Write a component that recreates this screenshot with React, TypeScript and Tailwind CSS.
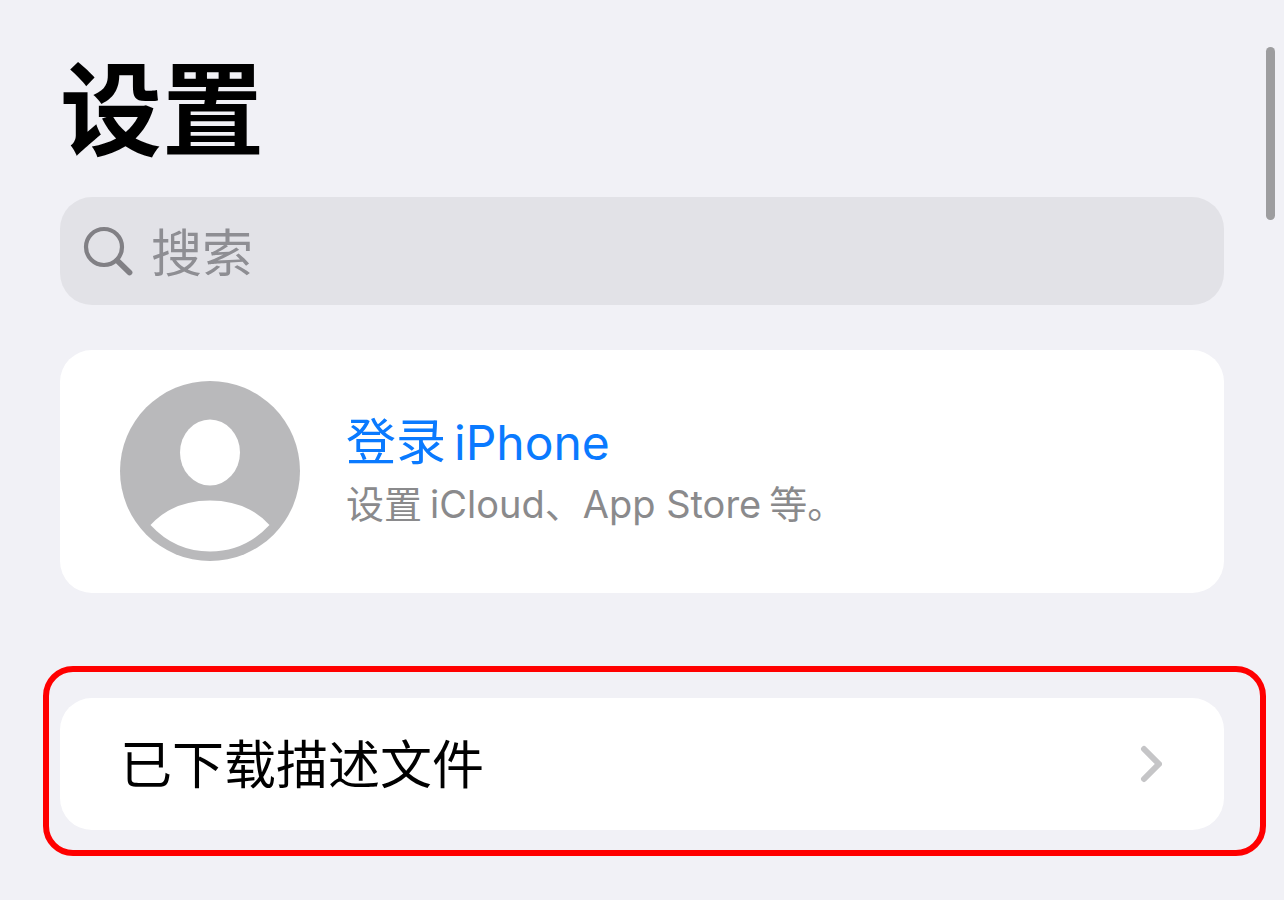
import { useState } from "react";

function SearchIcon() {
  return (
    <svg viewBox="0 0 50 50" className="size-[50px] shrink-0" fill="none" stroke="#818085" aria-hidden="true">
      <circle cx="21" cy="21" r="18" strokeWidth="4.2" />
      <path d="M34.2 34.5 46.5 46.5" strokeWidth="5.8" strokeLinecap="round" />
    </svg>
  );
}

function Avatar() {
  return (
    <svg viewBox="0 0 180 180" className="size-[180px] shrink-0" aria-hidden="true">
      <circle cx="90" cy="90" r="90" fill="#b9b9bb" />
      <ellipse cx="90" cy="71.5" rx="30" ry="33" fill="#fff" />
      <path d="M30.5 144Q53 119.5 90 119.5T149.5 144Q125 170.5 90 170.5T30.5 144Z" fill="#fff" />
    </svg>
  );
}

function Chevron() {
  return (
    <svg viewBox="0 0 22 38" className="h-[38px] w-[22px] shrink-0" fill="none" aria-hidden="true">
      <path d="M4 4 19 19 4 34" stroke="#c5c5c7" strokeWidth="6" strokeLinecap="round" strokeLinejoin="round" />
    </svg>
  );
}

export default function App() {
  const [query, setQuery] = useState("");

  return (
    <div
      lang="zh-CN"
      className="relative min-h-screen bg-[#f1f1f6] pt-12 font-['Inter','Noto_Sans_CJK_SC',sans-serif] text-black"
    >
      <header className="px-[60px]">
        <h1 className="text-[102px] leading-[126px] font-bold">设置</h1>
        <label className="mt-[23px] flex h-[108px] items-center gap-[18px] rounded-[32px] bg-[#e2e2e7] px-[23px]">
          <SearchIcon />
          <input
            type="text"
            aria-label="搜索"
            placeholder="搜索"
            value={query}
            onChange={(e) => setQuery(e.target.value)}
            className="h-20 min-w-0 flex-1 bg-transparent pt-1 text-[51px] outline-none placeholder:text-[#8e8e93]"
          />
        </label>
      </header>

      <main className="pb-11">
        <a href="#sign-in" className="mx-[60px] mt-[45px] flex items-center gap-[46px] rounded-[32px] bg-white px-[60px] pt-[31px] pb-8">
          <Avatar />
          <span className="flex flex-col">
            <span className="text-[50px] leading-[64px] text-[#0a7aff]">
              登录<span className="ml-2 text-[48px]">iPhone</span>
            </span>
            <span className="text-[38px] leading-[58px] text-[#8a8a8c]">
              设置<span className="ml-2">iCloud</span>、<span className="mr-2">App Store</span>等。
            </span>
          </span>
        </a>

        {/* highlighted row */}
        <div className="mt-[73px] mr-[18px] ml-[43px] rounded-[30px] border-6 border-[#ff0000] pt-[26px] pr-9 pb-5 pl-[11px]">
          <a href="#profile" className="flex h-[132px] items-center justify-between rounded-[32px] bg-white pr-[62px] pl-[60px]">
            <span className="pt-1 text-[52px] leading-[76px]">已下载描述文件</span>
            <Chevron />
          </a>
        </div>
      </main>

      {/* scroll indicator */}
      <div className="absolute top-[47px] right-[9px] h-[173px] w-[9px] rounded-full bg-[#9d9d9f]" />
    </div>
  );
}
